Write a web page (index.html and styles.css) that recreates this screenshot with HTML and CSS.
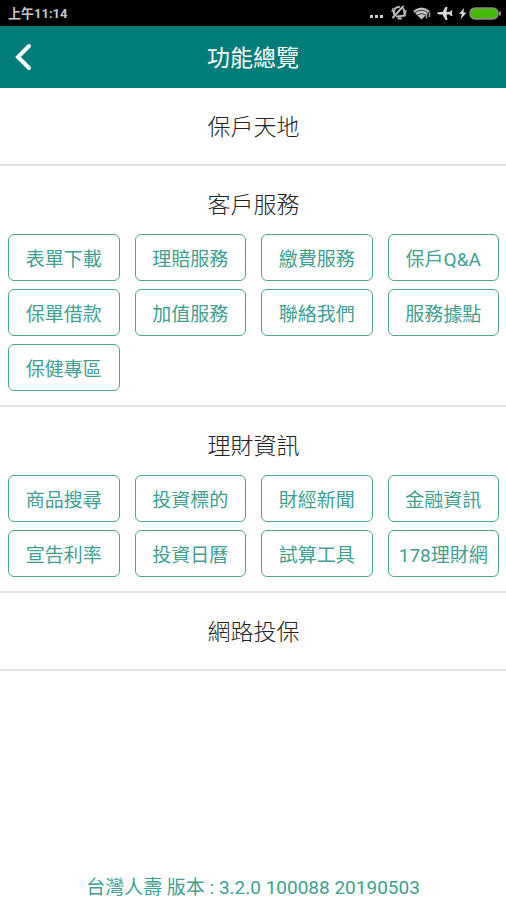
FILE: index.html
```html
<!DOCTYPE html>
<html lang="zh-Hant">
<head>
    <meta charset="UTF-8">
    <meta name="viewport" content="width=device-width, initial-scale=1.0">
    <title>功能總覽</title>
    <link rel="stylesheet" href="styles.css">
</head>
<body>
    <div class="status-bar">
        <span class="status-time">上午11:14</span>
        <svg class="status-icons" width="138" height="26" viewBox="368 0 138 26" aria-hidden="true">
            <!-- more -->
            <g fill="#d0d0d0">
                <rect x="370" y="15" width="3" height="3"/>
                <rect x="375" y="15" width="3" height="3"/>
                <rect x="380" y="15" width="3" height="3"/>
            </g>
            <!-- muted bell -->
            <g fill="none" stroke="#bcbcbc" stroke-width="2" stroke-linecap="round" stroke-linejoin="round">
                <path d="M394 14C393 9 396 7 399 7M403.500 9C405 11 403.500 13 405 15.500L397 16.500M398.500 18.500H401"/>
                <path d="M403 6.500L393 17.500"/>
            </g>
            <path d="M392 12L393 8M406 10L405.500 14" stroke="#a0a0a0" stroke-width="1.500"/>
            <!-- wifi -->
            <path d="M413 11Q421.500 4 430 11L421.500 19.500Z" fill="#c4c4c4"/>
            <path d="M415 12.500Q421.500 8 428 12.500M417.500 15Q421.500 12 425.500 15" fill="none" stroke="#303030" stroke-width="1"/>
            <path d="M426.500 13.500V18.500M429.500 12.500V17" stroke="#a0a0a0" stroke-width="1.500"/>
            <!-- airplane -->
            <path d="M453 13Q452.500 14.500 450 14.500H447.500L444.500 20H442.500L443.500 14.500H440.500L439 16H437.500L438.200 13L437.500 10.500H439L440.500 12H443.500L442.500 7H444.500L447.500 12H450Q452.500 12 453 13Z" fill="#d8d8d8" transform="translate(890 0) scale(-1 1)"/>
            <!-- charging -->
            <path d="M464 8L459 14H462L460.500 19.500L466.500 12.500H463.500Z" fill="#d8d8d8"/>
            <rect x="470" y="8" width="28" height="11" rx="5" fill="#45bd08" stroke="#8b8b8b" stroke-width="1.500"/>
            <path d="M500 11.500V15.500" stroke="#8b8b8b" stroke-width="2"/>
        </svg>
    </div>

    <header class="top-bar">
        <button class="back-button" type="button" aria-label="返回">
            <svg width="18" height="28" viewBox="0 0 18 28" aria-hidden="true">
                <path d="M14 3L3 14L14 25" fill="none" stroke="#ffffff" stroke-width="4" stroke-linecap="round" stroke-linejoin="miter"/>
            </svg>
        </button>
        <h1>功能總覽</h1>
    </header>

    <main>
        <section class="group">
            <h2>保戶天地</h2>
        </section>

        <section class="group">
            <h2>客戶服務</h2>
            <div class="menu">
                <button type="button">表單下載</button>
                <button type="button">理賠服務</button>
                <button type="button">繳費服務</button>
                <button type="button">保戶Q&amp;A</button>
                <button type="button">保單借款</button>
                <button type="button">加值服務</button>
                <button type="button">聯絡我們</button>
                <button type="button">服務據點</button>
                <button type="button">保健專區</button>
            </div>
        </section>

        <section class="group">
            <h2>理財資訊</h2>
            <div class="menu">
                <button type="button">商品搜尋</button>
                <button type="button">投資標的</button>
                <button type="button">財經新聞</button>
                <button type="button">金融資訊</button>
                <button type="button">宣告利率</button>
                <button type="button">投資日曆</button>
                <button type="button">試算工具</button>
                <button type="button">178理財網</button>
            </div>
        </section>

        <section class="group">
            <h2>網路投保</h2>
        </section>
    </main>

    <footer class="version">台灣人壽 版本 : 3.2.0 100088 20190503</footer>
</body>
</html>
```
FILE: styles.css
```css
* {
    box-sizing: border-box;
}

body {
    display: flex;
    flex-direction: column;
    min-height: 100vh;
    margin: 0;
    background-color: #ffffff;
    color: #222222;
    font-family: Roboto, "Noto Sans CJK TC", sans-serif;
}

.status-bar {
    display: flex;
    align-items: center;
    justify-content: space-between;
    height: 26px;
    padding-left: 8px;
    background-color: #000000;
    color: #c8c8c8;
}

.status-time {
    padding-top: 2px;
    font-size: 13px;
    font-weight: bold;
    line-height: 20px;
}

.top-bar {
    display: grid;
    grid-template-columns: 48px 1fr 48px;
    align-items: center;
    height: 62px;
    background-color: #007d7a;
    color: #ffffff;
}

.top-bar h1 {
    margin: 0;
    padding-top: 4px;
    font-size: 23px;
    font-weight: 400;
    line-height: 36px;
    text-align: center;
}

.back-button {
    display: flex;
    align-items: center;
    justify-content: center;
    height: 48px;
    padding: 0;
    border: none;
    background: none;
    cursor: pointer;
}

.group {
    padding: 22px 7px 14px 8px;
    border-bottom: 2px solid #e2e2e2;
}

.group h2 {
    margin: 0;
    font-size: 23px;
    font-weight: 300;
    line-height: 36px;
    text-align: center;
}

.group h2:last-child {
    margin-bottom: 4px;
}

.menu {
    display: grid;
    grid-template-columns: repeat(4, 1fr);
    gap: 8px 15px;
    margin-top: 10px;
}

.menu button {
    height: 47px;
    padding: 0;
    border: 1px solid #4da398;
    border-radius: 6px;
    background-color: #ffffff;
    color: #409f92;
    font-family: inherit;
    font-size: 19px;
    font-weight: 400;
    white-space: nowrap;
    cursor: pointer;
}

.version {
    margin-top: auto;
    color: #409f92;
    font-size: 19px;
    font-weight: 400;
    line-height: 24px;
    text-align: center;
}
```
